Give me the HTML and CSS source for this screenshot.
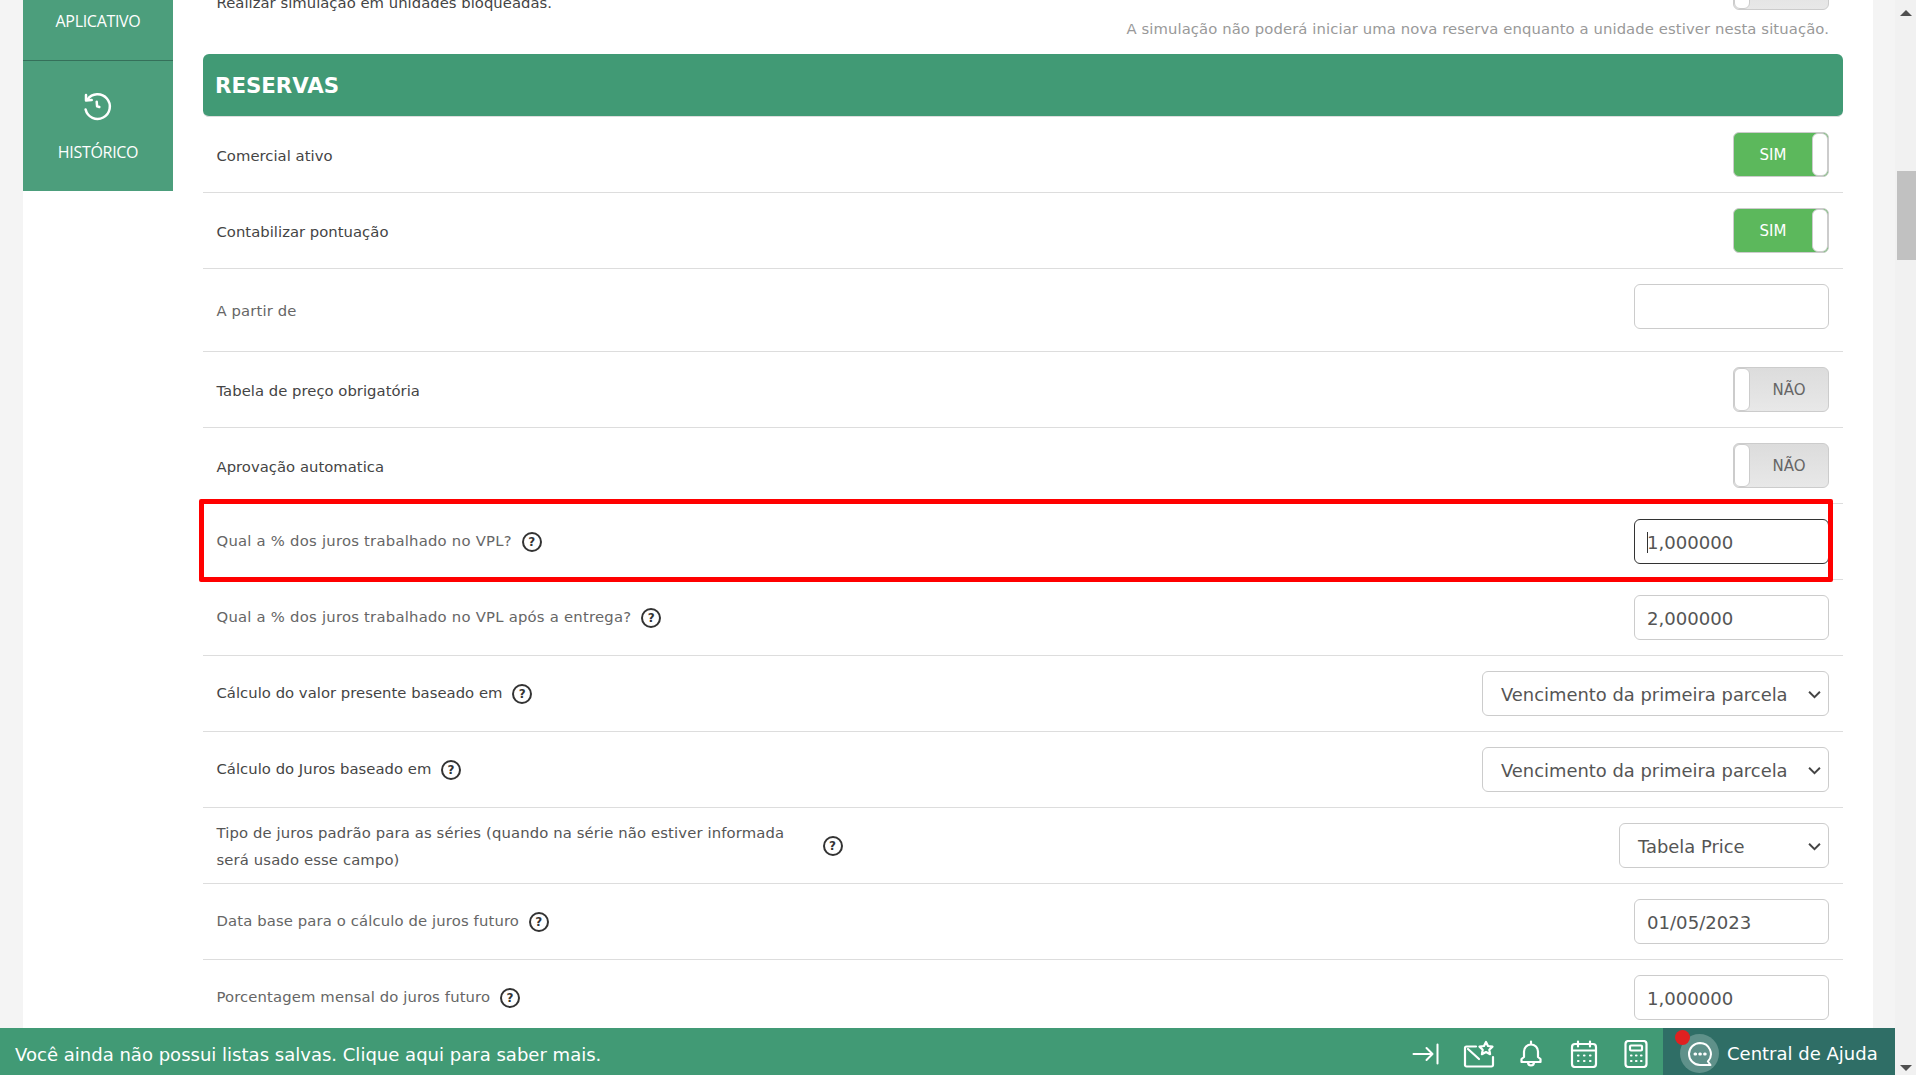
FILE: index.html
```html
<!DOCTYPE html>
<html lang="pt-br">
<head>
    <meta charset="UTF-8">
    <meta name="viewport" content="width=device-width, initial-scale=1.0">
    <title>Configurações - Reservas</title>
    <link rel="stylesheet" href="styles.css">
</head>
<body>

<div class="page">
    <aside class="sidebar">
        <a class="side-item side-item-first">APLICATIVO</a>
        <a class="side-item">
            <svg class="side-icon" viewBox="0 0 28 28" fill="none" stroke="#fff" stroke-width="2.5" stroke-linecap="round" stroke-linejoin="round">
                <path d="M3.500 6.500A12.300 12.300 0 1 1 1.600 16.500"/>
                <path d="M2 2v5.500l5.700-.5"/>
                <path d="M12.700 8.700l.4 4.600 2.200.7"/>
            </svg>
            <span>HISTÓRICO</span>
        </a>
    </aside>

    <main class="content">
        <div class="row row-top">
            <div class="row-main">
                <span class="label label-dark label-cut">Realizar simulação em unidades bloqueadas.</span>
                <div class="toggle toggle-off"><span class="toggle-knob"></span><span class="toggle-text">NÃO</span></div>
            </div>
            <p class="hint">A simulação não poderá iniciar uma nova reserva enquanto a unidade estiver nesta situação.</p>
        </div>

        <h2 class="section-title">RESERVAS</h2>

        <div class="row">
            <span class="label label-dark">Comercial ativo</span>
            <div class="toggle toggle-on"><span class="toggle-text">SIM</span><span class="toggle-knob"></span></div>
        </div>
        <div class="row">
            <span class="label label-dark">Contabilizar pontuação</span>
            <div class="toggle toggle-on"><span class="toggle-text">SIM</span><span class="toggle-knob"></span></div>
        </div>
        <div class="row row-tall">
            <span class="label">A partir de</span>
            <input class="field" type="text">
        </div>
        <div class="row">
            <span class="label label-dark">Tabela de preço obrigatória</span>
            <div class="toggle toggle-off"><span class="toggle-knob"></span><span class="toggle-text">NÃO</span></div>
        </div>
        <div class="row">
            <span class="label label-dark">Aprovação automatica</span>
            <div class="toggle toggle-off"><span class="toggle-knob"></span><span class="toggle-text">NÃO</span></div>
        </div>
        <div class="row row-marked">
            <span class="label label-vpl">Qual a % dos juros trabalhado no VPL? <span class="help">?</span></span>
            <div class="field field-focus"><span class="caret"></span>1,000000</div>
            <span class="red-box"></span>
        </div>
        <div class="row">
            <span class="label label-vpl">Qual a % dos juros trabalhado no VPL após a entrega? <span class="help">?</span></span>
            <input class="field" type="text" value="2,000000">
        </div>
        <div class="row">
            <span class="label label-dark">Cálculo do valor presente baseado em <span class="help">?</span></span>
            <div class="select select-wide">Vencimento da primeira parcela
                <svg class="chevron" viewBox="0 0 12 8" fill="none" stroke="#444" stroke-width="1.8"><path d="M1 1.500l5 5 5-5"/></svg>
            </div>
        </div>
        <div class="row">
            <span class="label label-dark">Cálculo do Juros baseado em <span class="help">?</span></span>
            <div class="select select-wide">Vencimento da primeira parcela
                <svg class="chevron" viewBox="0 0 12 8" fill="none" stroke="#444" stroke-width="1.8"><path d="M1 1.500l5 5 5-5"/></svg>
            </div>
        </div>
        <div class="row">
            <div class="label-wrap">
                <span class="label label-two">Tipo de juros padrão para as séries (quando na série não estiver informada será usado esse campo)</span>
                <span class="help">?</span>
            </div>
            <div class="select select-small">Tabela Price
                <svg class="chevron" viewBox="0 0 12 8" fill="none" stroke="#444" stroke-width="1.8"><path d="M1 1.500l5 5 5-5"/></svg>
            </div>
        </div>
        <div class="row">
            <span class="label">Data base para o cálculo de juros futuro <span class="help">?</span></span>
            <input class="field" type="text" value="01/05/2023">
        </div>
        <div class="row">
            <span class="label">Porcentagem mensal do juros futuro <span class="help">?</span></span>
            <input class="field" type="text" value="1,000000">
        </div>
    </main>
</div>

<footer class="bottom-bar">
    <span class="bottom-msg">Você ainda não possui listas salvas. Clique aqui para saber mais.</span>
    <div class="bottom-icons">
        <svg class="icon-arrow" width="28" height="22" viewBox="0 0 28 22" fill="none" stroke="#fff" stroke-width="2" stroke-linecap="round" stroke-linejoin="round">
            <path d="M1.500 11h19M14.500 5l6 6-6 6M25.500 1.500v19"/>
        </svg>
        <svg class="icon-mail" width="32" height="28" viewBox="0 0 32 28" fill="none" stroke="#fff" stroke-width="2.200" stroke-linecap="round" stroke-linejoin="round">
            <path d="M13 6.500H3.500A1.500 1.500 0 0 0 2 8v17a1.500 1.500 0 0 0 1.500 1.500h25a1.500 1.500 0 0 0 1.500-1.500v-8"/>
            <path d="M5 9l11 10"/>
            <path d="M23 2l2 4 4.500.6-3.200 3.100.8 4.500-4.100-2.200-4.100 2.200.8-4.500-3.200-3.100 4.500-.6z"/>
        </svg>
        <svg class="icon-bell" width="22" height="28" viewBox="0 0 22 28" fill="none" stroke="#fff" stroke-width="2.200" stroke-linecap="round" stroke-linejoin="round">
            <path d="M11 1.500v2M4 17v-5.500a7 7 0 0 1 14 0V17l2.500 2v3h-19v-3z"/>
            <path d="M8 22c0 2.500 1.500 3.500 3 3.500s3-1 3-3.500"/>
        </svg>
        <svg class="icon-calendar" width="28" height="28" viewBox="0 0 28 28" fill="none" stroke="#fff" stroke-width="2.200" stroke-linecap="round" stroke-linejoin="round">
            <rect x="2" y="4" width="24" height="23" rx="3"/>
            <path d="M2 10.500h24M8 1.500v5M20 1.500v5"/>
            <path d="M8 15.500h.5M14 15.500h.5M20 15.500h.5M8 21h.5M14 21h.5M20 21h.5"/>
        </svg>
        <svg class="icon-calc" width="24" height="28" viewBox="0 0 24 28" fill="none" stroke="#fff" stroke-width="2.200" stroke-linecap="round" stroke-linejoin="round">
            <rect x="1.500" y="1" width="21" height="26" rx="3"/>
            <rect x="6" y="5.500" width="12" height="5" rx="1"/>
            <path d="M7 15.500h.5M12 15.500h.5M17 15.500h.5M7 21h.5M12 21h.5M17 21h.5"/>
        </svg>
    </div>
    <div class="help-center">
        <span class="help-dot"></span>
        <span class="help-circle">
            <svg width="26" height="26" viewBox="0 0 26 26" fill="none" stroke="#fff" stroke-width="2" stroke-linecap="round" stroke-linejoin="round">
                <path d="M13 2a11 11 0 1 0 0 22h10.500l-2.600-3.500A11 11 0 0 0 13 2z"/>
                <path d="M8 13h.6M12.800 13h.6M17.600 13h.6" stroke-width="3"/>
            </svg>
        </span>
        <span class="help-text">Central de Ajuda</span>
    </div>
</footer>

<div class="scrollbar">
    <span class="arrow-up"></span>
    <span class="thumb"></span>
    <span class="arrow-down"></span>
</div>

</body>
</html>
```

FILE: styles.css
```css
* {
    box-sizing: border-box;
    margin: 0;
    padding: 0;
}

html, body {
    height: 100%;
    overflow: hidden;
}

body {
    background-color: #f4f4f4;
    font-family: "DejaVu Sans", Verdana, sans-serif;
}

.page {
    display: flex;
    width: 1850px;
    height: 1075px;
    margin-left: 23px;
    background: white;
    overflow: hidden;
}

.sidebar {
    flex: 0 0 150px;
    font-family: "Open Sans", sans-serif;
}

.side-item {
    display: flex;
    flex-direction: column;
    align-items: center;
    height: 130px;
    padding-top: 32px;
    background-color: #4c9e7c;
    color: white;
    font-size: 16px;
    letter-spacing: -0.3px;
}

.side-item-first {
    height: 61px;
    padding-top: 10px;
    border-bottom: 1px solid #35705a;
}

.side-icon {
    width: 28px;
    height: 28px;
    margin-bottom: 20px;
    overflow: visible;
}

.content {
    flex: 1;
    margin: -35px 30px 0 30px;
}

.row {
    display: flex;
    align-items: center;
    justify-content: space-between;
    position: relative;
    height: 76px;
    padding: 0 14px 0 13.5px;
    border-bottom: 1px solid #ddd;
}

.row-tall {
    height: 83px;
}

.row-tall .field {
    margin-bottom: 7px;
}

.row-top {
    display: block;
    height: 89px;
    border-bottom: none;
}

.row-main {
    display: flex;
    align-items: flex-start;
    justify-content: space-between;
    height: 44px;
}

.hint {
    margin-top: 11px;
    text-align: right;
    font-size: 14.8px;
    letter-spacing: 0.1px;
    color: #999;
}

.label {
    padding-top: 1px;
    font-size: 14.8px;
    letter-spacing: 0.13px;
    color: #666;
}

.label-dark {
    letter-spacing: 0.03px;
    color: #444;
}

.label-vpl {
    letter-spacing: 0.24px;
}

.label-cut {
    margin-top: 29px;
    padding-top: 0;
}

.label-wrap {
    display: flex;
    align-items: center;
}

.label-two {
    width: 590px;
    margin-right: 11px;
    line-height: 27px;
    color: #555;
}

.help {
    display: inline-flex;
    align-items: center;
    justify-content: center;
    width: 20px;
    height: 20px;
    margin-left: 5px;
    border: 2px solid #333;
    border-radius: 50%;
    font-size: 12px;
    font-weight: bold;
    color: #333;
    vertical-align: middle;
}

.section-title {
    height: 63px;
    padding: 0 12px;
    line-height: 63px;
    background-color: #419a75;
    border-bottom: 1px solid #ddd;
    border-radius: 6px;
    color: white;
    font-size: 21.3px;
    font-weight: bold;
}

.toggle {
    display: flex;
    width: 96px;
    height: 45px;
    border: 1px solid #ccc;
    border-radius: 6px;
    overflow: hidden;
    font-size: 15px;
}

.toggle-on {
    background-color: #5cb85c;
    color: white;
}

.toggle-off {
    background: linear-gradient(#dcdcdc, #e8e8e8);
    color: #666;
}

.toggle-text {
    flex: 1;
    line-height: 44px;
    text-align: center;
}

.toggle-knob {
    flex: 0 0 16px;
    background: white;
    border-radius: 6px;
    border: 1px solid #ccc;
}

.field, .select {
    height: 45px;
    border: 1px solid #ccc;
    border-radius: 6px;
    background: white;
    color: #555;
    font-family: "DejaVu Sans", Verdana, sans-serif;
}

.field {
    display: block;
    width: 195px;
    padding: 2px 12px 0;
    font-size: 18.1px;
    line-height: 41px;
    outline: none;
}

.field-focus {
    border-color: #333;
    position: relative;
}

.caret {
    position: absolute;
    left: 12px;
    top: 12px;
    width: 1px;
    height: 21px;
    background: #333;
}

.select {
    display: flex;
    align-items: center;
    justify-content: space-between;
    padding: 2px 7px 0 18px;
    font-size: 17.9px;
}

.select-wide {
    width: 347px;
}

.select-small {
    width: 210px;
}

.chevron {
    width: 13px;
    height: 9px;
}

.red-box {
    position: absolute;
    left: -4px;
    right: 10px;
    top: -5px;
    bottom: -3px;
    border: 5px solid #f00;
    border-radius: 2px;
    pointer-events: none;
}

.bottom-bar {
    position: fixed;
    left: 0;
    bottom: 0;
    display: flex;
    align-items: center;
    width: 1895px;
    height: 47px;
    background-color: #419a75;
    color: white;
}

.bottom-msg {
    flex: 1;
    padding: 5px 0 0 15px;
    font-size: 18.05px;
}

.bottom-icons {
    display: flex;
    align-items: center;
    padding: 5px 15px 0 0;
}

.icon-mail {
    margin-left: 23px;
}

.icon-bell {
    margin-left: 25px;
}

.icon-calendar {
    margin-left: 28px;
}

.icon-calc {
    margin-left: 26px;
}

.help-center {
    position: relative;
    display: flex;
    align-items: center;
    gap: 8px;
    width: 232px;
    height: 47px;
    padding: 4px 0 0 17px;
    background-color: #2f6e66;
}

.help-circle {
    display: flex;
    align-items: center;
    justify-content: center;
    width: 39px;
    height: 39px;
    border-radius: 50%;
    background-color: #5f918a;
}

.help-dot {
    position: absolute;
    left: 12px;
    top: 2px;
    width: 15px;
    height: 15px;
    border-radius: 50%;
    background-color: #e02020;
}

.help-text {
    font-size: 18px;
}

.scrollbar {
    position: fixed;
    top: 0;
    right: 0;
    bottom: 0;
    width: 21px;
    background-color: #f1f1f1;
}

.thumb {
    position: absolute;
    top: 171px;
    left: 2px;
    right: 0;
    height: 89px;
    background-color: #c1c1c1;
}

.arrow-up, .arrow-down {
    position: absolute;
    left: 5px;
    border-left: 6px solid transparent;
    border-right: 6px solid transparent;
}

.arrow-up {
    top: 10px;
    border-bottom: 6px solid #505050;
}

.arrow-down {
    bottom: 4px;
    border-top: 6px solid #505050;
}
```
